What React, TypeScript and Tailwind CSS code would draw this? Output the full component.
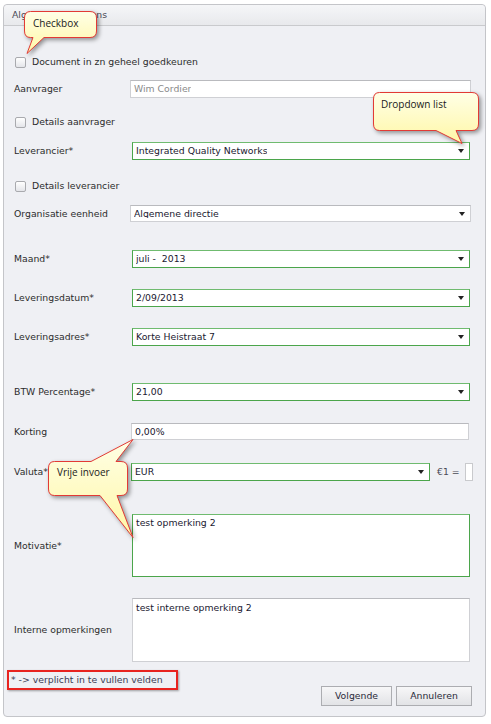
import React from 'react';

type FieldProps = {
  children?: React.ReactNode;
  green?: boolean;
  select?: boolean;
  muted?: boolean;
  className?: string;
};

function Field({ children, green, select, muted, className = '' }: FieldProps) {
  return (
    <div
      className={
        'relative flex items-center bg-white pl-[3px] pr-[14px] ' +
        (green
          ? 'border border-[#4ba54b] border-t-[#6fbb6f] '
          : 'border border-[#cfd0d4] border-t-[#b9babe] ') +
        (muted ? 'text-[#8a8a8a] ' : 'text-[#1a1830] ') +
        className
      }
    >
      <span className="truncate">{children}</span>
      {select && (
        <span className="absolute right-[5px] top-1/2 -translate-y-1/2 w-0 h-0 border-l-[3px] border-r-[3px] border-t-[4px] border-l-transparent border-r-transparent border-t-[#222]" />
      )}
    </div>
  );
}

function Row({ label, children, className = '' }: { label: string; children: React.ReactNode; className?: string }) {
  return (
    <div className={'flex items-center ' + className}>
      <div className="w-[117px] shrink-0 text-[#2c2c2c]">{label}</div>
      {children}
    </div>
  );
}

function Check({ label, className = '' }: { label: string; className?: string }) {
  return (
    <div className={'flex items-center h-[18px] pl-px ' + className}>
      <span className="w-[11px] h-[11px] rounded-[2px] border border-[#a9aaae] bg-gradient-to-b from-[#ffffff] to-[#e4e5e9]" />
      <span className="ml-[6px] text-[#2c2c2c]">{label}</span>
    </div>
  );
}

function Callouts() {
  return (
    <>
      <svg
        className="absolute left-0 top-0 pointer-events-none drop-shadow-[2px_2px_2px_rgba(0,0,0,0.4)]"
        width="491"
        height="724"
        viewBox="0 0 491 724"
      >
        <defs>
          <linearGradient id="bub" x1="0" y1="0" x2="0" y2="1">
            <stop offset="0" stopColor="#ffffe6" />
            <stop offset="1" stopColor="#fff7a6" />
          </linearGradient>
        </defs>
        <g fill="url(#bub)" stroke="#e23a35" strokeWidth="1" strokeLinejoin="round">
          <path d="M30.5,11.5 H90 Q96.5,11.5 96.5,18 V31 Q96.5,37.5 90,37.5 H44 L27,53.5 L33,37.5 H30.5 Q24.5,37.5 24.5,31 V18 Q24.5,11.5 30.5,11.5 Z" />
          <path d="M379.5,92.5 H472 Q478.5,92.5 478.5,99 V124 Q478.5,130.5 472,130.5 H456 L462,143.5 L436,130.5 H379.5 Q373.5,130.5 373.5,124 V99 Q373.5,92.5 379.5,92.5 Z" />
          <path d="M54.5,461.5 H91 L133,439.5 L116,461.5 H121 Q127.5,461.5 127.5,468 V489 Q127.5,495.5 121,495.5 H117 L133,537.5 L100,495.5 H54.5 Q48.5,495.5 48.5,489 V468 Q48.5,461.5 54.5,461.5 Z" />
        </g>
      </svg>
      <div className="absolute left-[33px] top-[18px] font-['Open_Sans',sans-serif] text-[10px] text-[#1a1a1a]">Checkbox</div>
      <div className="absolute left-[381px] top-[99px] font-['Open_Sans',sans-serif] text-[10px] text-[#1a1a1a]">Dropdown list</div>
      <div className="absolute left-[57px] top-[467px] font-['Open_Sans',sans-serif] text-[10px] text-[#1a1a1a]">Vrije invoer</div>
    </>
  );
}

export default function App() {
  return (
    <div className="relative w-[491px] h-[724px] bg-white overflow-hidden font-['DejaVu_Sans',sans-serif] text-[9.3px] leading-none">
      <div className="ml-[3px] pt-[4px]">
        <div className="w-[483px] h-[713px] rounded-[4px] border border-[#c4c5c9] bg-[#eff0f4] flex flex-col">
          <div className="h-[21px] shrink-0 rounded-t-[4px] border-b border-[#c9cacd] bg-gradient-to-b from-[#f5f6f8] to-[#e8e9ec] flex items-center pl-[8px] text-[#4a4a55]">
            Algemene gegevens
          </div>

          <div className="pl-[10px] flex flex-col">
            <Check label="Document in zn geheel goedkeuren" className="mt-[27px]" />

            <Row label="Aanvrager" className="mt-[9px]">
              <Field muted className="h-[18px] w-[341px] -ml-px">Wim Cordier</Field>
            </Row>

            <Check label="Details aanvrager" className="mt-[15px]" />

            <Row label="Leverancier*" className="mt-[11px]">
              <Field green select className="h-[18px] w-[338px] ml-px">Integrated Quality Networks</Field>
            </Row>

            <Check label="Details leverancier" className="mt-[17px]" />

            <Row label="Organisatie eenheid" className="mt-[10px]">
              <Field select className="h-[17px] w-[341px] -ml-px">Algemene directie</Field>
            </Row>

            <Row label="Maand*" className="mt-[28px]">
              <Field green select className="h-[18px] w-[338px] ml-px">juli -&nbsp; 2013</Field>
            </Row>

            <Row label="Leveringsdatum*" className="mt-[21px]">
              <Field green select className="h-[18px] w-[338px] ml-px">2/09/2013</Field>
            </Row>

            <Row label="Leveringsadres*" className="mt-[21px]">
              <Field green select className="h-[18px] w-[338px] ml-px">Korte Heistraat 7</Field>
            </Row>

            <Row label="BTW Percentage*" className="mt-[37px]">
              <Field green select className="h-[18px] w-[338px] ml-px">21,00</Field>
            </Row>

            <Row label="Korting" className="mt-[22px]">
              <Field className="h-[17px] w-[338px]">0,00%</Field>
            </Row>

            <Row label="Valuta*" className="mt-[23px]">
              <Field green select className="h-[18px] w-[299px]">EUR</Field>
              <span className="ml-[7px] text-[#4a4a55]">€1 =</span>
              <span className="ml-[5px] h-[18px] w-[8px] bg-white border border-[#c9cacd]" />
            </Row>

            <Row label="Motivatie*" className="mt-[33px]">
              <div className="h-[63px] w-[338px] ml-px bg-white border border-[#4ba54b] border-t-[#6fbb6f] px-[3px] pt-[3px] text-[#1a1830]">
                test opmerking 2
              </div>
            </Row>

            <Row label="Interne opmerkingen" className="mt-[21px]">
              <div className="h-[64px] w-[338px] ml-px bg-white border border-[#cfd0d4] border-t-[#b9babe] px-[3px] pt-[4px] text-[#1a1830]">
                test interne opmerking 2
              </div>
            </Row>
          </div>

          <div className="mt-[8px] flex justify-between pl-[3px] pr-[13px]">
            <div className="self-start h-[20px] w-[171px] border-2 border-[#e8231f] shadow-[1px_1px_2px_rgba(0,0,0,0.35)] flex items-center pl-[2px] text-[#3a3a55]">
              * -&gt; verplicht in te vullen velden
            </div>
            <div className="flex gap-[4px] mt-[16px]">
              <button className="h-[20px] w-[71px] border border-[#acadb1] bg-gradient-to-b from-[#f7f7f8] to-[#e2e3e6] text-[#2a2a3a]">
                Volgende
              </button>
              <button className="h-[20px] w-[76px] border border-[#acadb1] bg-gradient-to-b from-[#f7f7f8] to-[#e2e3e6] text-[#2a2a3a]">
                Annuleren
              </button>
            </div>
          </div>
        </div>
      </div>
      <Callouts />
    </div>
  );
}
